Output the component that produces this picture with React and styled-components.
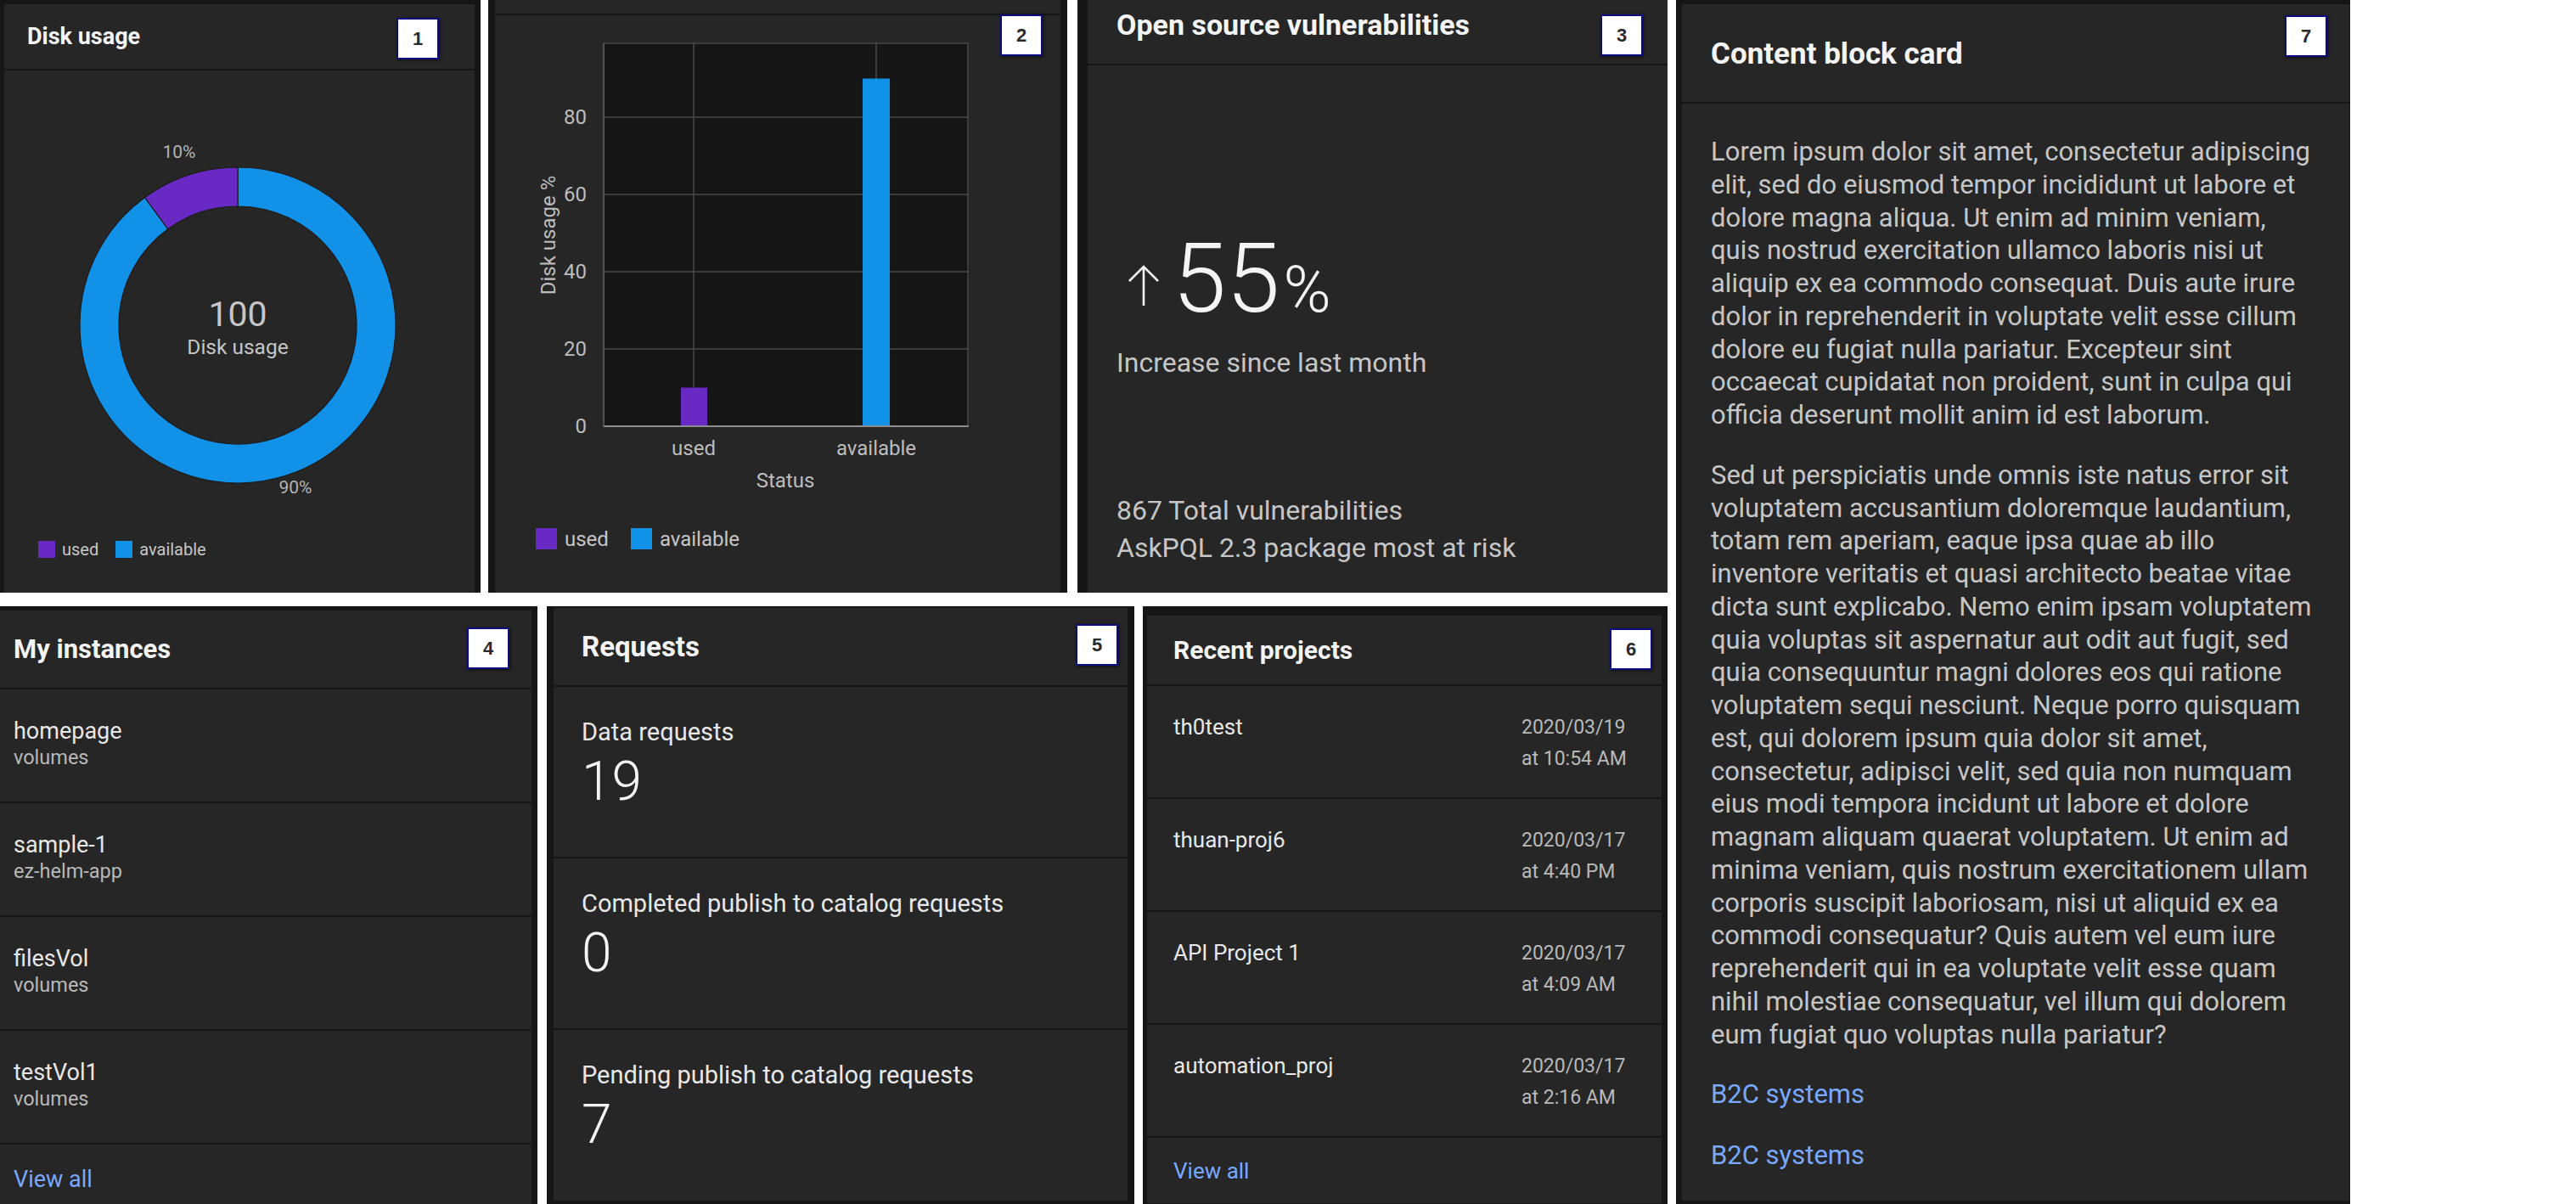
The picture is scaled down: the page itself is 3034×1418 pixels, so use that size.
import React from 'react';
import styled, { createGlobalStyle } from 'styled-components';

const GlobalStyle = createGlobalStyle`
  html, body { margin: 0; padding: 0; background: #ffffff; }
  body { font-family: Roboto, "Liberation Sans", Arial, sans-serif; }
  *, *::before, *::after { box-sizing: border-box; }
`;

const FONT = 'Roboto, "Liberation Sans", Arial, sans-serif';
const BLUE = '#1192e8';
const PURPLE = '#6929c4';

const Page = styled.div`
  width: 3034px;
  height: 1418px;
  display: flex;
  align-items: stretch;
  background: #ffffff;
  overflow: hidden;
`;

const LeftColumn = styled.div`
  width: 1964px;
  flex: none;
  display: flex;
  flex-direction: column;
  gap: 16px;
`;

const Row = styled.div`
  height: ${p => p.$h}px;
  flex: none;
  display: flex;
  align-items: stretch;
`;

const Frame = styled.section`
  position: relative;
  flex: none;
  width: ${p => p.$w}px;
  margin-left: ${p => p.$ml || 0}px;
  padding: ${p => p.$pad};
  background: #161616;
  display: flex;
  flex-direction: column;
`;

const Card = styled.div`
  position: relative;
  flex: 1;
  min-height: 0;
  background: #262626;
  display: flex;
  flex-direction: column;
  overflow: hidden;
`;

const Header = styled.header`
  flex: none;
  height: ${p => p.$h}px;
  border-bottom: 2px solid #161616;
  padding: ${p => (p.$pt != null ? p.$pt : 0)}px 0 0 ${p => p.$pl || 0}px;
  display: flex;
  align-items: ${p => (p.$pt != null ? 'flex-start' : 'center')};
`;

const Title = styled.h2`
  margin: 0;
  font-size: ${p => p.$size}px;
  line-height: 1.2;
  font-weight: 700;
  color: #f4f4f4;
  white-space: nowrap;
`;

const Badge = styled.span`
  position: absolute;
  top: ${p => p.$top}px;
  right: ${p => p.$right}px;
  width: 50px;
  height: 49px;
  background: #ffffff;
  border: 2px solid #0b0b82;
  box-shadow: 1px 1px 3px rgba(0, 0, 0, 0.6);
  color: #2b2b2b;
  font: 700 22px "Liberation Sans", Arial, sans-serif;
  display: flex;
  align-items: center;
  justify-content: center;
  z-index: 2;
`;

/* ---------- charts ---------- */

const ChartSvg = styled.svg`
  display: block;
  flex: none;
  font-family: ${FONT};
`;

const Legend = styled.div`
  display: flex;
  align-items: center;
  gap: ${p => p.$gap}px;
  margin-top: ${p => p.$mt}px;
  padding-left: ${p => p.$pl}px;
  font-size: ${p => p.$fs}px;
  line-height: 1;
  color: #c6c6c6;
`;

const LegendItem = styled.span`
  display: flex;
  align-items: center;
  gap: ${p => p.$gap}px;
`;

const Swatch = styled.i`
  display: block;
  width: ${p => p.$s}px;
  height: ${p => p.$s}px;
  background: ${p => p.$color};
`;

function polar(cx, cy, r, a) {
  const rad = ((a - 90) * Math.PI) / 180;
  return [cx + r * Math.cos(rad), cy + r * Math.sin(rad)];
}

function ringPath(cx, cy, ro, ri, a0, a1) {
  const large = a1 - a0 > 180 ? 1 : 0;
  const [x0, y0] = polar(cx, cy, ro, a0);
  const [x1, y1] = polar(cx, cy, ro, a1);
  const [x2, y2] = polar(cx, cy, ri, a1);
  const [x3, y3] = polar(cx, cy, ri, a0);
  return `M${x0} ${y0} A${ro} ${ro} 0 ${large} 1 ${x1} ${y1} L${x2} ${y2} A${ri} ${ri} 0 ${large} 0 ${x3} ${y3} Z`;
}

function DonutChart() {
  const cx = 275, cy = 300, ro = 186, ri = 140;
  return (
    <ChartSvg width="554" height="510" viewBox="0 0 554 510">
      <path d={ringPath(cx, cy, ro, ri, 0, 324)} fill={BLUE} stroke="#1c1c1c" strokeWidth="1.2" />
      <path d={ringPath(cx, cy, ro, ri, 324, 360)} fill={PURPLE} stroke="#1c1c1c" strokeWidth="1.2" />
      <text x="206" y="96" fontSize="21" fill="#b4b4b4" textAnchor="middle" dominantBaseline="central">10%</text>
      <text x="343" y="491" fontSize="21" fill="#b4b4b4" textAnchor="middle" dominantBaseline="central">90%</text>
      <text x={cx} y="287" fontSize="41" fill="#c6c6c6" textAnchor="middle" dominantBaseline="central">100</text>
      <text x={cx} y="325" fontSize="24.5" fill="#c6c6c6" textAnchor="middle" dominantBaseline="central">Disk usage</text>
    </ChartSvg>
  );
}

function BarChart() {
  const x0 = 128, x1 = 557, yTop = 33, yBot = 484;
  const y = v => yBot - v * 4.55;
  const ticks = [0, 20, 40, 60, 80];
  return (
    <ChartSvg width="666" height="574" viewBox="0 0 666 574">
      <rect x={x0} y={yTop} width={x1 - x0} height={yBot - yTop} fill="#161616" stroke="#474747" strokeWidth="1.5" />
      {ticks.slice(1).map(t => (
        <line key={t} x1={x0} x2={x1} y1={y(t)} y2={y(t)} stroke="#4a4a4a" strokeWidth="1.5" />
      ))}
      <line x1="234" x2="234" y1={yTop} y2={yBot} stroke="#4a4a4a" strokeWidth="1.5" />
      <line x1="449" x2="449" y1={yTop} y2={yBot} stroke="#4a4a4a" strokeWidth="1.5" />
      <rect x="219" y={y(10)} width="31" height={yBot - y(10)} fill={PURPLE} />
      <rect x="433" y={y(90)} width="32" height={yBot - y(90)} fill={BLUE} />
      <line x1={x0} x2={x1 + 1} y1={yBot} y2={yBot} stroke="#8d8d8d" strokeWidth="2" />
      <line x1={x0} x2={x0} y1={yTop} y2={yBot} stroke="#5a5a5a" strokeWidth="1.5" />
      {ticks.map(t => (
        <text key={t} x="108" y={y(t)} fontSize="24" fill="#bdbdbd" textAnchor="end" dominantBaseline="central">{t}</text>
      ))}
      <text transform="translate(63 259) rotate(-90)" fontSize="24" fill="#bdbdbd" textAnchor="middle" dominantBaseline="central">Disk usage %</text>
      <text x="234" y="510" fontSize="24" fill="#bdbdbd" textAnchor="middle" dominantBaseline="central">used</text>
      <text x="449" y="510" fontSize="24" fill="#bdbdbd" textAnchor="middle" dominantBaseline="central">available</text>
      <text x="342" y="548" fontSize="24" fill="#bdbdbd" textAnchor="middle" dominantBaseline="central">Status</text>
    </ChartSvg>
  );
}

/* ---------- panel 3 ---------- */

const StatBody = styled.div`
  padding: 0 34px;
  display: flex;
  flex-direction: column;
`;

const BigValue = styled.div`
  margin-top: 194px;
  padding-left: 12px;
  font-size: 114px;
  line-height: 114px;
  font-weight: 300;
  color: #f4f4f4;
  white-space: nowrap;
`;

const ArrowSvg = styled.svg`
  display: inline-block;
  vertical-align: baseline;
  margin: 0 14px 5px 0;
`;

const Unit = styled.span`
  font-size: 76px;
  margin-left: 4px;
`;

const StatCaption = styled.div`
  margin-top: ${p => p.$mt}px;
  font-size: 32px;
  line-height: ${p => p.$lh}px;
  color: #c6c6c6;
  white-space: nowrap;
`;

/* ---------- lists ---------- */

const ListRow = styled.div`
  flex: none;
  height: ${p => p.$h}px;
  padding: ${p => p.$pt}px ${p => p.$pr || 0}px 0 ${p => p.$pl}px;
  border-bottom: ${p => (p.$last ? 'none' : '2px solid #161616')};
`;

const Primary = styled.div`
  font-size: ${p => p.$size}px;
  line-height: ${p => p.$lh}px;
  color: #e8e8e8;
  white-space: nowrap;
`;

const Secondary = styled.div`
  font-size: ${p => p.$size}px;
  line-height: ${p => p.$lh}px;
  color: #b9b9b9;
  white-space: nowrap;
`;

const BigNumber = styled.div`
  margin-top: 6px;
  font-size: 64px;
  line-height: 70px;
  font-weight: 300;
  color: #f4f4f4;
`;

const ProjectGrid = styled.div`
  display: grid;
  grid-template-columns: 410px 1fr;
  align-items: start;
`;

const Footer = styled.div`
  padding: ${p => p.$pt}px 0 0 ${p => p.$pl}px;
`;

const Link = styled.a`
  display: block;
  color: #78a9ff;
  text-decoration: none;
  font-size: ${p => p.$size}px;
  line-height: ${p => p.$lh}px;
  margin-top: ${p => p.$mt || 0}px;
  white-space: nowrap;
`;

/* ---------- panel 7 ---------- */

const ContentBody = styled.div`
  padding: 38px 40px 0 34px;
`;

const Paragraph = styled.p`
  margin: 0 0 32px;
  font-size: 31px;
  line-height: 38.75px;
  color: #c6c6c6;
`;

const instances = [
  { name: 'homepage', type: 'volumes' },
  { name: 'sample-1', type: 'ez-helm-app' },
  { name: 'filesVol', type: 'volumes' },
  { name: 'testVol1', type: 'volumes' },
];

const requests = [
  { label: 'Data requests', value: '19' },
  { label: 'Completed publish to catalog requests', value: '0' },
  { label: 'Pending publish to catalog requests', value: '7' },
];

const projects = [
  { name: 'th0test', date: '2020/03/19', time: 'at 10:54 AM' },
  { name: 'thuan-proj6', date: '2020/03/17', time: 'at 4:40 PM' },
  { name: 'API Project 1', date: '2020/03/17', time: 'at 4:09 AM' },
  { name: 'automation_proj', date: '2020/03/17', time: 'at 2:16 AM' },
];

const P1 =
  'Lorem ipsum dolor sit amet, consectetur adipiscing elit, sed do eiusmod tempor incididunt ut labore et dolore magna aliqua. Ut enim ad minim veniam, quis nostrud exercitation ullamco laboris nisi ut aliquip ex ea commodo consequat. Duis aute irure dolor in reprehenderit in voluptate velit esse cillum dolore eu fugiat nulla pariatur. Excepteur sint occaecat cupidatat non proident, sunt in culpa qui officia deserunt mollit anim id est laborum.';
const P2 =
  'Sed ut perspiciatis unde omnis iste natus error sit voluptatem accusantium doloremque laudantium, totam rem aperiam, eaque ipsa quae ab illo inventore veritatis et quasi architecto beatae vitae dicta sunt explicabo. Nemo enim ipsam voluptatem quia voluptas sit aspernatur aut odit aut fugit, sed quia consequuntur magni dolores eos qui ratione voluptatem sequi nesciunt. Neque porro quisquam est, qui dolorem ipsum quia dolor sit amet, consectetur, adipisci velit, sed quia non numquam eius modi tempora incidunt ut labore et dolore magnam aliquam quaerat voluptatem. Ut enim ad minima veniam, quis nostrum exercitationem ullam corporis suscipit laboriosam, nisi ut aliquid ex ea commodi consequatur? Quis autem vel eum iure reprehenderit qui in ea voluptate velit esse quam nihil molestiae consequatur, vel illum qui dolorem eum fugiat quo voluptas nulla pariatur?';

export default function App() {
  return (
    <>
      <GlobalStyle />
      <Page>
        <LeftColumn>
          <Row $h={698}>
            <Frame $w={566} $pad="5px 7px 0 5px">
              <Card>
                <Header $h={78} $pl={27}>
                  <Title $size={27}>Disk usage</Title>
                </Header>
                <Badge $top={16} $right={42}>1</Badge>
                <DonutChart />
                <Legend $gap={20} $mt={44} $pl={40} $fs={20}>
                  <LegendItem $gap={8}><Swatch $s={20} $color={PURPLE} />used</LegendItem>
                  <LegendItem $gap={8}><Swatch $s={20} $color={BLUE} />available</LegendItem>
                </Legend>
              </Card>
            </Frame>

            <Frame $w={682} $ml={9} $pad="0 8px">
              <Card>
                <Header $h={18} />
                <Badge $top={17} $right={21}>2</Badge>
                <BarChart />
                <Legend $gap={26} $mt={30} $pl={48} $fs={24}>
                  <LegendItem $gap={9}><Swatch $s={25} $color={PURPLE} />used</LegendItem>
                  <LegendItem $gap={9}><Swatch $s={25} $color={BLUE} />available</LegendItem>
                </Legend>
              </Card>
            </Frame>

            <Frame $w={695} $ml={12} $pad="0 0 0 12px">
              <Card>
                <Header $h={77} $pl={34} $pt={9}>
                  <Title $size={34}>Open source vulnerabilities</Title>
                </Header>
                <Badge $top={17} $right={29}>3</Badge>
                <StatBody>
                  <BigValue>
                    <ArrowSvg width="40" height="52" viewBox="0 0 40 52">
                      <path d="M20 50 V4 M3 21 L20 4 L37 21" fill="none" stroke="#f4f4f4" strokeWidth="2.6" />
                    </ArrowSvg>
                    55<Unit>%</Unit>
                  </BigValue>
                  <StatCaption $mt={9} $lh={40}>Increase since last month</StatCaption>
                  <StatCaption $mt={132} $lh={44}>867 Total vulnerabilities</StatCaption>
                  <StatCaption $mt={0} $lh={44}>AskPQL 2.3 package most at risk</StatCaption>
                </StatBody>
              </Card>
            </Frame>
          </Row>

          <Row $h={704}>
            <Frame $w={633} $pad="5px 7px 0 0">
              <Card>
                <Header $h={93} $pl={16}>
                  <Title $size={31}>My instances</Title>
                </Header>
                <Badge $top={20} $right={26}>4</Badge>
                {instances.map(it => (
                  <ListRow key={it.name} $h={134} $pt={33} $pl={16}>
                    <Primary $size={27} $lh={32}>{it.name}</Primary>
                    <Secondary $size={23.5} $lh={30}>{it.type}</Secondary>
                  </ListRow>
                ))}
                <Footer $pt={25} $pl={16}>
                  <Link href="#" $size={27} $lh={32}>View all</Link>
                </Footer>
              </Card>
            </Frame>

            <Frame $w={692} $ml={11} $pad="2px 8px 4px 8px">
              <Card>
                <Header $h={93} $pl={33}>
                  <Title $size={33}>Requests</Title>
                </Header>
                <Badge $top={19} $right={11}>5</Badge>
                {requests.map((r, i) => (
                  <ListRow key={r.label} $h={202} $pt={35} $pl={33} $last={i === requests.length - 1}>
                    <Primary $size={29} $lh={36}>{r.label}</Primary>
                    <BigNumber>{r.value}</BigNumber>
                  </ListRow>
                ))}
              </Card>
            </Frame>

            <Frame $w={618} $ml={10} $pad="11px 7px 1px 5px">
              <Card>
                <Header $h={83} $pl={31}>
                  <Title $size={30}>Recent projects</Title>
                </Header>
                <Badge $top={15} $right={11}>6</Badge>
                {projects.map(p => (
                  <ListRow key={p.name} $h={133} $pt={30} $pl={31}>
                    <ProjectGrid>
                      <Primary $size={26} $lh={37}>{p.name}</Primary>
                      <div>
                        <Secondary $size={23} $lh={37}>{p.date}</Secondary>
                        <Secondary $size={23} $lh={37}>{p.time}</Secondary>
                      </div>
                    </ProjectGrid>
                  </ListRow>
                ))}
                <Footer $pt={23} $pl={31}>
                  <Link href="#" $size={26} $lh={32}>View all</Link>
                </Footer>
              </Card>
            </Frame>
          </Row>
        </LeftColumn>

        <Frame $w={794} $ml={10} $pad="5px 1px 4px 7px">
          <Card>
            <Header $h={117} $pl={34} $pt={38}>
              <Title $size={35}>Content block card</Title>
            </Header>
            <Badge $top={13} $right={26}>7</Badge>
            <ContentBody>
              <Paragraph>{P1}</Paragraph>
              <Paragraph>{P2}</Paragraph>
              <Link href="#" $size={31} $lh={38.75} $mt={3}>B2C systems</Link>
              <Link href="#" $size={31} $lh={38.75} $mt={33}>B2C systems</Link>
            </ContentBody>
          </Card>
        </Frame>
      </Page>
    </>
  );
}
